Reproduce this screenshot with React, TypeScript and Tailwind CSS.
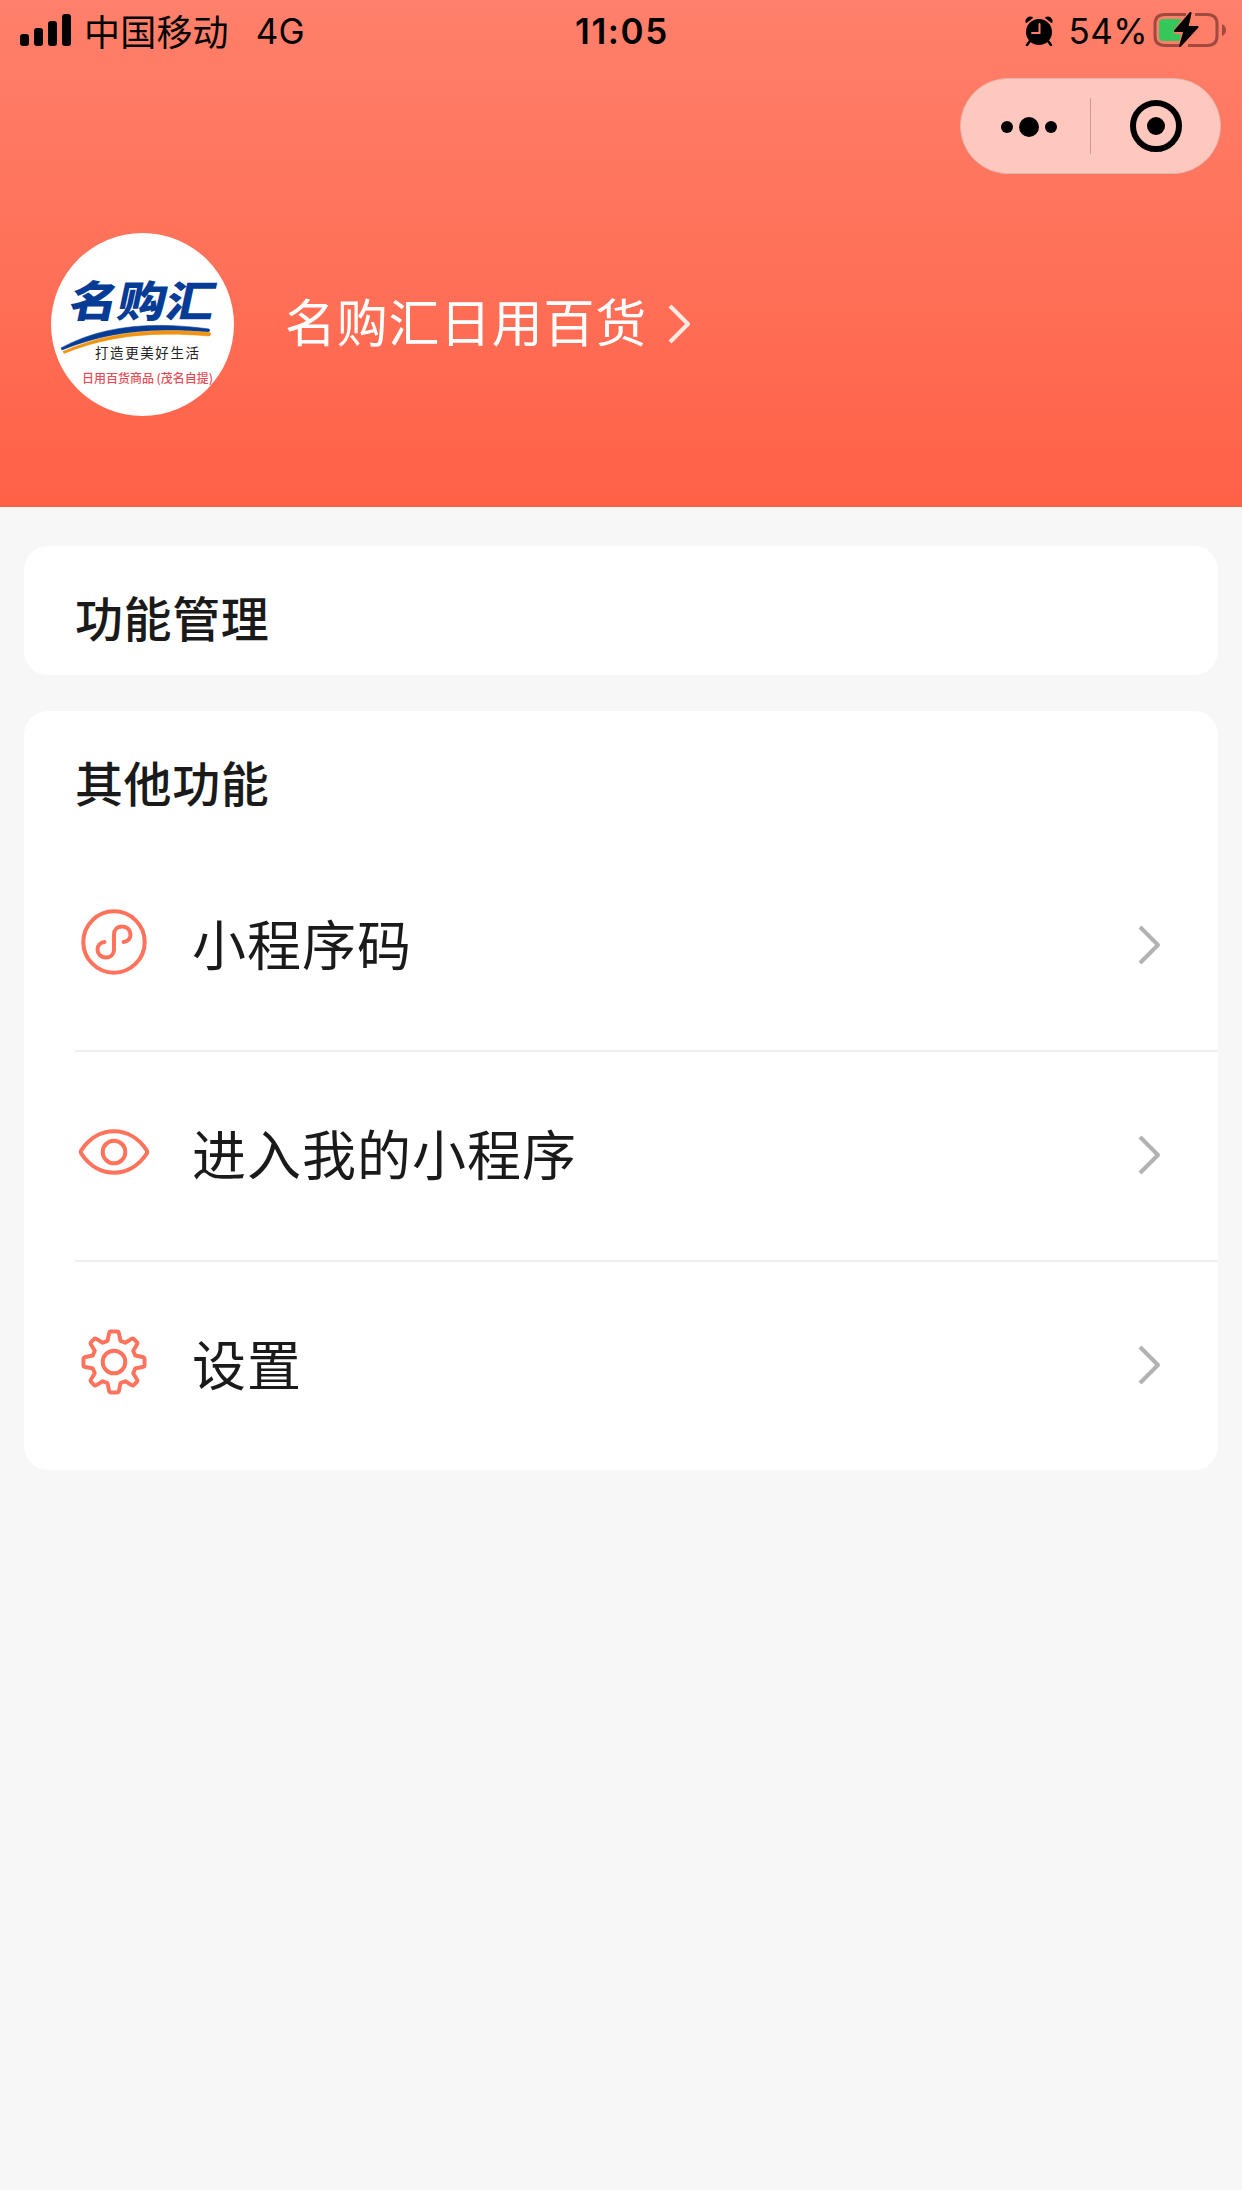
import React from "react";

const cjk = "font-['Inter','Noto_Sans_CJK_SC',sans-serif]";

function Chevron({ className }: { className: string }) {
  return (
    <svg viewBox="0 0 24 40" className={className} fill="none" stroke="currentColor" strokeWidth="4" strokeLinejoin="round">
      <path d="M2 2 L20 20 L2 38" />
    </svg>
  );
}

function StatusBar() {
  return (
    <div className="grid h-[62px] grid-cols-3 items-center text-black">
      <div className="flex items-center pl-5">
        <svg viewBox="0 0 52 32" className="mb-0.5 h-8 w-[52px]">
          <rect x="0" y="20" width="9" height="12" rx="3" />
          <rect x="14" y="14" width="9" height="18" rx="3" />
          <rect x="28" y="7" width="9" height="25" rx="3" />
          <rect x="42" y="0" width="9" height="32" rx="3" />
        </svg>
        <span className="mb-0.5 ml-3 font-['Noto_Sans_CJK_SC',sans-serif] text-[36px] leading-[60px] font-normal tracking-[0.2px]">中国移动</span>
        <span className="ml-[27px] font-['Inter',sans-serif] text-[35px] leading-[62px]">4G</span>
      </div>
      <div className="pl-0.5 text-center font-['Inter',sans-serif] text-[35px] font-semibold leading-[62px] tracking-[1.6px]">11:05</div>
      <div className="flex items-center justify-end pr-[15px]">
        <svg viewBox="0 0 28 30" className="h-[30px] w-7">
          <circle cx="14" cy="16" r="13" />
          <path d="M0.500 6.500 A5 5 0 0 1 7.500 1 L8 2 L1.500 7 Z M20 2 L20.500 1 A5 5 0 0 1 27.500 6.500 L26.500 7 Z" />
          <path d="M5 25 L2 29 M23 25 L26 29" stroke="black" strokeWidth="2.500" strokeLinecap="round" />
          <path d="M14.500 8 V17 H7" stroke="#ff7e68" strokeWidth="2" fill="none" strokeLinecap="round" />
        </svg>
        <span className="mr-[5px] ml-4 font-['Inter',sans-serif] text-[35px] leading-[62px] tracking-[0.4px]">54%</span>
        <svg viewBox="0 0 74 36" className="mb-0.5 h-9 w-[74px]">
          <g fill="none" stroke="#a0493f" strokeWidth="3">
            <path d="M33 2.500 H12 Q2 2.500 2 12 V24 Q2 33.500 12 33.500 H26" />
            <path d="M42 2.500 H54 Q64 2.500 64 12 V24 Q64 33.500 54 33.500 H35" />
          </g>
          <path d="M69 12 Q73 14 73 18 Q73 22 69 24 Z" fill="#a0493f" />
          <path d="M10 7 H29 L20.500 18.500 Q19.500 22 24 22 H28 L26.500 29 H10 Q6 29 6 25 V11 Q6 7 10 7 Z" fill="#34c759" />
          <path d="M37.500 1 L22 19 H31.500 L27 34 L44.500 15 H34.500 Z" stroke="black" strokeWidth="2" strokeLinejoin="round" />
        </svg>
      </div>
    </div>
  );
}

function Capsule() {
  return (
    <div className="mt-4 mr-[21px] ml-auto flex h-24 w-[261px] items-center rounded-full border border-[#e3b5ad] bg-[#ffc8bf]">
      <div className="flex w-[129px] items-center justify-end gap-1.5 pr-[33px] pt-px">
        <i className="size-3 rounded-full bg-black" />
        <i className="size-5 rounded-full bg-black" />
        <i className="size-3 rounded-full bg-black" />
      </div>
      <div className="h-14 w-px bg-[#c99b94]" />
      <div className="ml-[39px] flex size-[52px] items-center justify-center rounded-full border-[6px] border-black">
        <i className="size-[18px] rounded-full bg-black" />
      </div>
    </div>
  );
}

function Avatar() {
  return (
    <svg viewBox="0 0 183 183" className="size-[183px]">
      <circle cx="91.500" cy="91.500" r="91.500" fill="white" />
      <g transform="translate(16 84) skewX(-12)">
        <text x="0" y="0" textLength="145" lengthAdjust="spacingAndGlyphs" fontSize="43" fontWeight="900" fill="#073c96" className="font-['Noto_Sans_CJK_SC',sans-serif]">名购汇</text>
      </g>
      <path d="M10 115 C50 93 100 88 158 96 Q160 98 157 99 C100 94 55 99 11 117 Z" fill="#073c96" stroke="#073c96" strokeWidth="0.600" />
      <path d="M12 118.500 C55 99.500 100 94.500 159 99.500 Q161 102 158 103 C100 98 55 103 13 120.500 Z" fill="#ef9310" stroke="#ef9310" strokeWidth="0.600" />
      <text x="44" y="125" textLength="104" fontSize="13.500" fill="#222" className="font-['Noto_Sans_CJK_SC',sans-serif]">打造更美好生活</text>
      <text x="31" y="149.500" textLength="131" lengthAdjust="spacingAndGlyphs" fontSize="12" fontWeight="500" fill="#e94b55" className="font-['Noto_Sans_CJK_SC',sans-serif]">日用百货商品 (茂名自提)</text>
    </svg>
  );
}

function MiniProgramIcon() {
  return (
    <svg viewBox="0 0 72 72" className="size-[72px]" fill="none" stroke="#ff735c" strokeWidth="4" strokeLinecap="round">
      <circle cx="36" cy="36" r="30.700" />
      <path d="M26.500 36 C22 36.500 19.500 40 19.500 43.500 C19.500 48 23 51.500 28 51.500 C33 51.500 36 48 36 43.500 V28.500 C36 24 39 20.500 44 20.500 C49 20.500 52.500 24 52.500 28.500 C52.500 32.500 50 35.500 45.500 36" />
    </svg>
  );
}

function EyeIcon() {
  return (
    <svg viewBox="0 0 72 72" className="size-[72px]" fill="none" stroke="#ff735c" strokeWidth="4" strokeLinejoin="round">
      <path d="M3.300 34.300 C20 9 52 9 68.700 34.300 Q69.700 36 68.700 37.700 C52 63 20 63 3.300 37.700 Q2.300 36 3.300 34.300 Z" />
      <circle cx="36" cy="36" r="11.300" />
    </svg>
  );
}

function GearIcon() {
  return (
    <svg viewBox="0 0 72 72" className="size-[72px]" fill="none" stroke="#ff735c" strokeWidth="4" strokeLinejoin="round">
      <path transform="translate(36 36) scale(.985) translate(-36 -36)" d="M32.500 5 H39.500 Q40.500 5 40.800 6 L42.600 14.500 L47.500 16.500 L54.200 12.300 Q55.200 11.800 56 12.500 L59.500 16 Q60.200 16.800 59.700 17.800 L55.500 24.500 L57.500 29.400 L66 31.200 Q67 31.500 67 32.500 V39.500 Q67 40.500 66 40.800 L57.500 42.600 L55.500 47.500 L59.700 54.200 Q60.200 55.200 59.500 56 L56 59.500 Q55.200 60.200 54.200 59.700 L47.500 55.500 L42.600 57.500 L40.800 66 Q40.500 67 39.500 67 H32.500 Q31.500 67 31.200 66 L29.400 57.500 L24.500 55.500 L17.800 59.700 Q16.800 60.200 16 59.500 L12.500 56 Q11.800 55.200 12.300 54.200 L16.500 47.500 L14.500 42.600 L6 40.800 Q5 40.500 5 39.500 V32.500 Q5 31.500 6 31.200 L14.500 29.400 L16.500 24.500 L12.300 17.800 Q11.800 16.800 12.500 16 L16 12.500 Q16.800 11.800 17.800 12.300 L24.500 16.500 L29.400 14.500 L31.200 6 Q31.500 5 32.500 5 Z" />
      <circle cx="36" cy="36" r="11.300" />
    </svg>
  );
}

function Row({ icon, label }: { icon: React.ReactNode; label: string }) {
  return (
    <div className="ml-[51px] flex h-[210px] items-center border-t-2 border-[#efefef] first-of-type:border-transparent">
      <div className="mb-2 ml-[3px]">{icon}</div>
      <span className="mt-0.5 ml-[42px] text-[54px] leading-[80px] tracking-[1px] text-[#1a1a1a]">{label}</span>
      <Chevron className="mr-[56px] mb-0.5 ml-auto h-10 w-6 text-[#b2b2b2]" />
    </div>
  );
}

export default function App() {
  return (
    <div className="h-[2208px] w-[1242px] overflow-hidden bg-white">
      <div className={`h-[2190px] bg-[#f7f7f7] ${cjk}`}>
        <header className="h-[507px] bg-linear-to-b from-[#ff806b] to-[#ff6146]">
          <StatusBar />
          <Capsule />
          <div className="mt-[59px] ml-[51px] flex items-center">
            <Avatar />
            <span className="mb-0.5 ml-[51px] text-[51px] font-normal leading-[72px] tracking-[0.7px] text-white">名购汇日用百货</span>
            <Chevron className="mb-0.5 ml-[21px] h-10 w-6 text-[#ffeae7]" />
          </div>
        </header>
        <main className="px-6 pt-[39px]">
          <section className="h-[129px] rounded-3xl bg-white pt-[38px] pl-[51px]">
            <h2 className="text-[48px] font-medium leading-[72px] tracking-[0.6px] text-[#1a1a1a]">功能管理</h2>
          </section>
          <section className="mt-9 h-[759px] rounded-3xl bg-white">
            <h2 className="h-[129px] pt-[38px] pl-[51px] text-[48px] font-medium leading-[72px] tracking-[0.6px] text-[#1a1a1a]">其他功能</h2>
            <Row icon={<MiniProgramIcon />} label="小程序码" />
            <Row icon={<EyeIcon />} label="进入我的小程序" />
            <Row icon={<GearIcon />} label="设置" />
          </section>
        </main>
      </div>
    </div>
  );
}
